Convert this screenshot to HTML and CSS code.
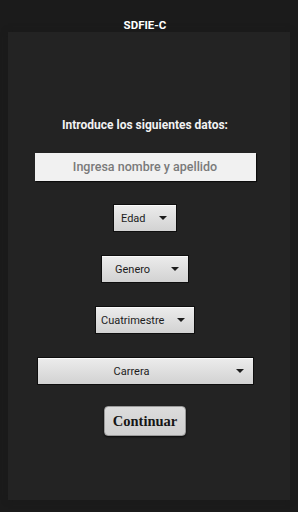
FILE: index.html
```html
<!DOCTYPE html>
<html lang="es">
<head>
  <meta charset="UTF-8">
  <meta name="viewport" content="width=device-width, initial-scale=1.0">
  <title>SDFIE-C</title>
  <link rel="stylesheet" href="styles.css">
</head>
<body>

  <header class="titlebar">SDFIE-C</header>

  <main class="panel">
    <h1 class="prompt">Introduce los siguientes datos:</h1>

    <div class="name-field">Ingresa nombre y apellido</div>

    <div class="spinner spinner-edad">
      <span>Edad</span>
      <span class="arrow"></span>
    </div>

    <div class="spinner spinner-genero">
      <span>Genero</span>
      <span class="arrow"></span>
    </div>

    <div class="spinner spinner-cuatri">
      <span>Cuatrimestre</span>
      <span class="arrow"></span>
    </div>

    <div class="spinner spinner-carrera">
      <span class="label-center">Carrera</span>
      <span class="arrow"></span>
    </div>

    <button class="continue">Continuar</button>
  </main>

</body>
</html>
```

FILE: styles.css
```css
body {
  margin: 0;
  background-color: #1b1b1b;
  font-family: Roboto, "Noto Sans", sans-serif;
  color: #fff;
  height: 512px;
  overflow: hidden;
}
.titlebar {
  height: 32px;
  box-sizing: border-box;
  padding: 18px 8px 0 0;
  text-align: center;
  font-size: 11.5px;
  line-height: 14px;
  font-weight: bold;
}
.panel {
  margin: 0 8px;
  height: 468px;
  box-sizing: border-box;
  padding: 85px 8px 0 0;
  background-color: #232323;
  box-shadow: 0 0 6px #1a1a1a;
  display: flex;
  flex-direction: column;
  align-items: center;
}
.prompt {
  margin: 0;
  font-size: 12px;
  line-height: 16px;
  font-weight: bold;
  color: #f2f2f2;
}
.name-field {
  margin-top: 20px;
  width: 221px;
  height: 28px;
  box-sizing: border-box;
  background-color: #f1f1f1;
  box-shadow: 1px 1px 1px #0c0c0c;
  color: #7a7a7a;
  font-size: 12.5px;
  font-weight: 500;
  line-height: 28px;
  text-align: center;
}
.spinner {
  margin-top: 23px;
  height: 28px;
  box-sizing: border-box;
  display: flex;
  align-items: center;
  justify-content: space-between;
  padding: 0 9px 0 7px;
  background: linear-gradient(#ececec, #d2d2d2);
  border: 1px solid #0e0e0e;
  box-shadow: inset 0 1px 0 #fafafa;
  color: #1c1c1c;
  font-size: 11px;
}
.spinner-edad {
  width: 64px;
}
.spinner-genero {
  width: 88px;
  padding-left: 13px;
}
.spinner-cuatri {
  width: 100px;
  padding-left: 5px;
}
.spinner-carrera {
  width: 217px;
  padding-left: 0;
}
.label-center {
  flex: 1;
  text-align: center;
  padding-right: 10px;
}
.arrow {
  width: 0;
  height: 0;
  border-left: 4px solid transparent;
  border-right: 4px solid transparent;
  border-top: 4px solid #1c1c1c;
}
.continue {
  margin-top: 21px;
  width: 82px;
  height: 30px;
  padding: 0;
  background: linear-gradient(#dcdcdc, #cfcfcf);
  border: 1px solid #9a9a9a;
  border-radius: 4px;
  box-shadow: 0 1px 2px #0a0a0a;
  color: #151515;
  font-family: "Liberation Serif", "DejaVu Serif", serif;
  font-weight: bold;
  font-size: 14.5px;
}
```
